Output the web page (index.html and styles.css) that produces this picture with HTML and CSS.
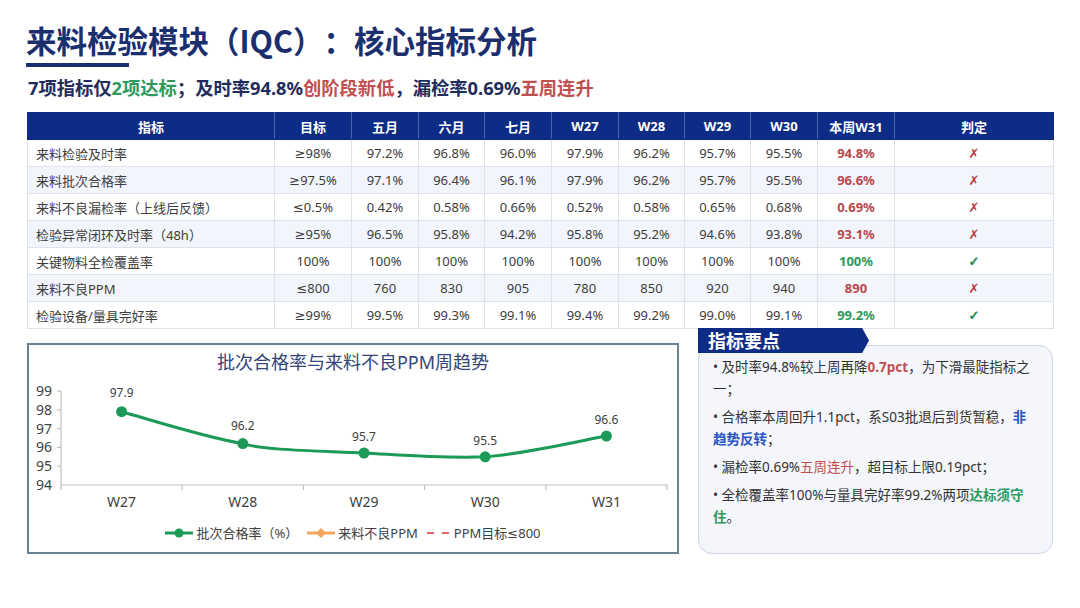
FILE: index.html
```html
<!DOCTYPE html>
<html lang="zh-CN">
<head>
<meta charset="utf-8">
<title>来料检验模块（IQC）：核心指标分析</title>
<link rel="stylesheet" href="styles.css">
</head>
<body>
<div class="page">
  <header class="head">
    <h1 class="title">来料检验模块（IQC）：核心指标分析</h1>
    <div class="title-bar"></div>
    <p class="subtitle">7项指标仅<span class="c-green">2项达标</span>；及时率94.8%<span class="c-red">创阶段新低</span>，漏检率0.69%<span class="c-red">五周连升</span></p>
  </header>

  <table class="kpi">
    <colgroup>
      <col class="w-name"><col class="w-target"><col class="w-m"><col class="w-m2"><col class="w-m"><col class="w-m"><col class="w-m2"><col class="w-m2"><col class="w-m"><col class="w-cur"><col class="w-judge">
    </colgroup>
    <thead>
      <tr><th>指标</th><th>目标</th><th>五月</th><th>六月</th><th>七月</th><th>W27</th><th>W28</th><th>W29</th><th>W30</th><th>本周W31</th><th>判定</th></tr>
    </thead>
    <tbody>
      <tr><td class="name">来料检验及时率</td><td>≥98%</td><td>97.2%</td><td>96.8%</td><td>96.0%</td><td>97.9%</td><td>96.2%</td><td>95.7%</td><td>95.5%</td><td class="cur bad">94.8%</td><td class="mark bad">✗</td></tr>
      <tr><td class="name">来料批次合格率</td><td>≥97.5%</td><td>97.1%</td><td>96.4%</td><td>96.1%</td><td>97.9%</td><td>96.2%</td><td>95.7%</td><td>95.5%</td><td class="cur bad">96.6%</td><td class="mark bad">✗</td></tr>
      <tr><td class="name">来料不良漏检率（上线后反馈）</td><td>≤0.5%</td><td>0.42%</td><td>0.58%</td><td>0.66%</td><td>0.52%</td><td>0.58%</td><td>0.65%</td><td>0.68%</td><td class="cur bad">0.69%</td><td class="mark bad">✗</td></tr>
      <tr><td class="name">检验异常闭环及时率（48h）</td><td>≥95%</td><td>96.5%</td><td>95.8%</td><td>94.2%</td><td>95.8%</td><td>95.2%</td><td>94.6%</td><td>93.8%</td><td class="cur bad">93.1%</td><td class="mark bad">✗</td></tr>
      <tr><td class="name">关键物料全检覆盖率</td><td>100%</td><td>100%</td><td>100%</td><td>100%</td><td>100%</td><td>100%</td><td>100%</td><td>100%</td><td class="cur good">100%</td><td class="mark good">✓</td></tr>
      <tr><td class="name">来料不良PPM</td><td>≤800</td><td>760</td><td>830</td><td>905</td><td>780</td><td>850</td><td>920</td><td>940</td><td class="cur bad">890</td><td class="mark bad">✗</td></tr>
      <tr><td class="name">检验设备/量具完好率</td><td>≥99%</td><td>99.5%</td><td>99.3%</td><td>99.1%</td><td>99.4%</td><td>99.2%</td><td>99.0%</td><td>99.1%</td><td class="cur good">99.2%</td><td class="mark good">✓</td></tr>
    </tbody>
  </table>

  <div class="bottom">
    <section class="chart-card">
      <div class="chart-title">批次合格率与来料不良PPM周趋势</div>
      <svg class="plot" width="648" height="142" viewBox="0 0 648 142" xmlns="http://www.w3.org/2000/svg">
        <g class="axis">
          <line x1="32" y1="16" x2="32" y2="110"/>
          <line x1="28" y1="16" x2="32" y2="16"/>
          <line x1="28" y1="34.8" x2="32" y2="34.8"/>
          <line x1="28" y1="53.6" x2="32" y2="53.6"/>
          <line x1="28" y1="72.4" x2="32" y2="72.4"/>
          <line x1="28" y1="91.2" x2="32" y2="91.2"/>
          <line x1="32" y1="110" x2="638" y2="110"/>
          <line x1="32" y1="110" x2="32" y2="115"/>
          <line x1="153.2" y1="110" x2="153.2" y2="115"/>
          <line x1="274.4" y1="110" x2="274.4" y2="115"/>
          <line x1="395.6" y1="110" x2="395.6" y2="115"/>
          <line x1="516.8" y1="110" x2="516.8" y2="115"/>
          <line x1="638" y1="110" x2="638" y2="115"/>
        </g>
        <g class="ylab">
          <text x="23" y="21">99</text>
          <text x="23" y="39.8">98</text>
          <text x="23" y="58.6">97</text>
          <text x="23" y="77.4">96</text>
          <text x="23" y="96.2">95</text>
          <text x="23" y="115">94</text>
        </g>
        <g class="xlab">
          <text x="92.6" y="132">W27</text>
          <text x="213.8" y="132">W28</text>
          <text x="335" y="132">W29</text>
          <text x="456.2" y="132">W30</text>
          <text x="577.4" y="132">W31</text>
        </g>
        <path class="series" d="M92.6 36.7 C112.8 42 173.4 61.8 213.8 68.6 C234 75.5 294.6 75.9 335 78 C375.4 80.2 415.8 83.6 456.2 81.8 C496.6 79 557.2 64.6 577.4 61.1"/>
        <g class="dots">
          <circle cx="92.6" cy="36.7" r="5.5"/>
          <circle cx="213.8" cy="68.6" r="5.5"/>
          <circle cx="335" cy="78" r="5.5"/>
          <circle cx="456.2" cy="81.8" r="5.5"/>
          <circle cx="577.4" cy="61.1" r="5.5"/>
        </g>
        <g class="dlab">
          <text x="92.6" y="22">97.9</text>
          <text x="213.8" y="55">96.2</text>
          <text x="335" y="66">95.7</text>
          <text x="456.2" y="70">95.5</text>
          <text x="577.4" y="49">96.6</text>
        </g>
      </svg>
      <div class="legend">
        <span class="lg-item">
          <svg width="28" height="12" viewBox="0 0 28 12"><line x1="0" y1="6" x2="28" y2="6" stroke="#1c9a57" stroke-width="3"/><circle cx="14" cy="6" r="4.5" fill="#1c9a57"/></svg>
          批次合格率（%）
        </span>
        <span class="lg-item">
          <svg width="28" height="12" viewBox="0 0 28 12"><line x1="0" y1="6" x2="28" y2="6" stroke="#f2a55c" stroke-width="3"/><path d="M14 1 L19 6 L14 11 L9 6 Z" fill="#f2a55c"/></svg>
          来料不良PPM
        </span>
        <span class="lg-item">
          <svg width="24" height="12" viewBox="0 0 24 12"><line x1="0" y1="6" x2="7" y2="6" stroke="#e0646a" stroke-width="2"/><line x1="15" y1="6" x2="22" y2="6" stroke="#e0646a" stroke-width="2"/></svg>
          PPM目标≤800
        </span>
      </div>
    </section>

    <aside class="notes">
      <div class="notes-tab">指标要点</div>
      <div class="notes-box">
        <p>• 及时率94.8%较上周再降<b class="c-red">0.7pct</b>，为下滑最陡指标之一；</p>
        <p>• 合格率本周回升1.1pct，系S03批退后到货暂稳，<b class="c-blue">非趋势反转</b>；</p>
        <p>• 漏检率0.69%<span class="c-red">五周连升</span>，超目标上限0.19pct；</p>
        <p>• 全检覆盖率100%与量具完好率99.2%两项<b class="c-green">达标须守住</b>。</p>
      </div>
    </aside>
  </div>
</div>
</body>
</html>
```

FILE: styles.css
```css
* { box-sizing: border-box; }

html, body {
  margin: 0;
  padding: 0;
  background: #ffffff;
}

body {
  font-family: "Noto Sans", "DejaVu Sans", "Noto Sans CJK SC", sans-serif;
  color: #333333;
  text-spacing-trim: space-all;
}

.page {
  width: 1080px;
  height: 608px;
  padding: 0 27px;
  overflow: hidden;
}

/* ---------- header ---------- */
.head {
  padding-top: 20px;
}

.title {
  margin: 0 0 0 -1px;
  font-family: "Noto Sans CJK SC", sans-serif;
  font-size: 30.5px;
  line-height: 40px;
  font-weight: 700;
  color: #1b2f6e;
}

.title-bar {
  width: 103px;
  height: 4px;
  margin: 3px 0 0 -1px;
  background: #1b2f6e;
}

.subtitle {
  margin: 9px 0 0 1px;
  font-size: 18.3px;
  line-height: 24px;
  font-weight: 700;
  color: #1f2c5c;
}

.c-green { color: #2e9a5a; }
.c-red { color: #bf5050; }
.c-blue { color: #2a55c2; }

/* ---------- table ---------- */
.kpi {
  margin-top: 12px;
  width: 1026px;
  border-collapse: collapse;
  table-layout: fixed;
  font-size: 13px;
  color: #3d3d3d;
}

.w-name { width: 247px; }
.w-target { width: 77px; }
.w-m { width: 67px; }
.w-m2 { width: 66px; }
.w-cur { width: 77px; }
.w-judge { width: 159px; }

.kpi tr { height: 27px; }

.kpi th {
  background: #0c2c85;
  color: #ffffff;
  font-weight: 700;
  padding: 0;
  border: 1px solid #0c2c85;
  border-right-color: #4763ad;
  text-align: center;
}

.kpi th:last-child { border-right-color: #0c2c85; }

.kpi td {
  padding: 0;
  border: 1px solid #dde2ec;
  text-align: center;
  background: #ffffff;
}

.kpi tbody tr:nth-child(even) td { background: #f2f5fb; }

.kpi td.name {
  text-align: left;
  padding-left: 8px;
}

.kpi td.cur { font-weight: 700; }
.kpi td.bad { color: #b9484f; }
.kpi td.good { color: #2e9a5a; }

.kpi td.mark {
  font-family: "DejaVu Sans", sans-serif;
  font-size: 13px;
  font-weight: 700;
}
.kpi td.mark.bad { color: #c0393f; }
.kpi td.mark.good {
  color: #2b8a4f;
  -webkit-text-stroke: 0.7px #2b8a4f;
}

/* ---------- bottom area ---------- */
.bottom {
  display: flex;
  align-items: flex-start;
  gap: 19px;
}

.chart-card {
  margin-top: 14px;
  width: 652px;
  height: 211px;
  border: 2px solid #6a8494;
  background: #ffffff;
  display: flex;
  flex-direction: column;
}

.chart-title {
  margin-top: 4px;
  height: 26px;
  line-height: 26px;
  text-align: center;
  font-size: 18px;
  color: #33457a;
}

.plot { display: block; }

.axis line {
  stroke: #bfbfbf;
  stroke-width: 1.2;
}

.ylab text {
  font-family: "Noto Sans", sans-serif;
  font-size: 14px;
  fill: #404040;
  text-anchor: end;
}

.xlab text {
  font-family: "Noto Sans", sans-serif;
  font-size: 14px;
  fill: #404040;
  text-anchor: middle;
}

.series {
  fill: none;
  stroke: #1c9a57;
  stroke-width: 3;
  stroke-linecap: round;
}

.dots circle { fill: #1c9a57; }

.dlab text {
  font-family: "Noto Sans", sans-serif;
  font-size: 12px;
  fill: #404040;
  text-anchor: middle;
}

.legend {
  margin-top: 6px;
  display: flex;
  justify-content: center;
  gap: 9px;
  font-size: 13px;
  line-height: 20px;
  color: #404040;
}

.lg-item {
  display: flex;
  align-items: center;
  gap: 3px;
}

.lg-item svg { display: block; }

/* ---------- notes ---------- */
.notes {
  width: 355px;
  display: flex;
  flex-direction: column;
}

.notes-tab {
  position: relative;
  z-index: 1;
  width: 171px;
  height: 25px;
  margin-top: -1px;
  margin-bottom: -8px;
  padding-left: 10px;
  background: #0c2c85;
  color: #ffffff;
  font-family: "Noto Sans CJK SC", sans-serif;
  font-size: 18px;
  font-weight: 700;
  line-height: 25px;
  clip-path: polygon(0 0, 96% 0, 100% 50%, 96% 100%, 0 100%);
}

.notes-box {
  height: 209px;
  border: 1px solid #cdd4e2;
  border-radius: 14px;
  background: #f4f6fc;
  padding: 10px 16px 0 14px;
  font-size: 13.5px;
  line-height: 22px;
  color: #333333;
}

.notes-box p {
  margin: 0 0 6px;
}

.notes-box b { font-weight: 700; }
```
